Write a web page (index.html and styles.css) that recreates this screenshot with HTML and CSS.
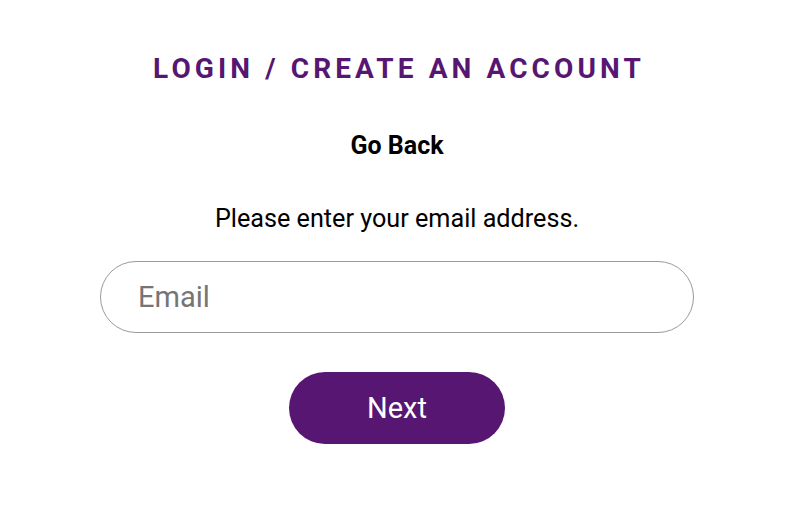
FILE: index.html
```html
<!DOCTYPE html>
<html>

<head>
	<title>Login</title>
	<meta charset="utf-8">
	<meta name="viewport" content="width=device-width, initial-scale=1.0">
	<link rel="stylesheet" href="styles.css">
</head>

<body>
	<main class="login">
		<h1 class="overskrift">LOGIN / CREATE AN ACCOUNT</h1>
		<a class="tilbage" href="#">Go Back</a>
		<p class="besked">Please enter your email address.</p>
		<input class="email" type="email" placeholder="Email">
		<button class="naeste">Next</button>
	</main>
</body>

</html>
```

FILE: styles.css
```css
body {
	margin: 0;
	padding: 0;
	background-color: white;
	font-family: Roboto, "Liberation Sans", sans-serif;
}

.login {
	width: 594px;
	margin: 0 0 0 100px;
	display: flex;
	flex-direction: column;
	align-items: center;
}

.overskrift {
	font-size: 28px;
	font-weight: 700;
	letter-spacing: 4.1px;
	text-indent: 4px;
	color: #561672;
	margin: 52px 0 0 0;
	line-height: 34px;
}

.tilbage {
	font-size: 25px;
	font-weight: 700;
	color: black;
	text-decoration: none;
	margin-top: 45px;
	line-height: 30px;
}

.besked {
	font-size: 25.2px;
	margin: 43px 0 0 0;
	line-height: 30px;
}

.email {
	box-sizing: border-box;
	width: 594px;
	height: 72px;
	margin-top: 27px;
	padding: 0 37px;
	border: 1px solid #9a9a9a;
	border-radius: 36px;
	font-family: Roboto, sans-serif;
	font-size: 29px;
	outline: none;
}

.email::placeholder {
	color: #757575;
}

.naeste {
	width: 216px;
	height: 72px;
	margin-top: 39px;
	border: none;
	border-radius: 36px;
	background-color: #561672;
	color: white;
	font-family: Roboto, sans-serif;
	font-size: 29px;
}
```
